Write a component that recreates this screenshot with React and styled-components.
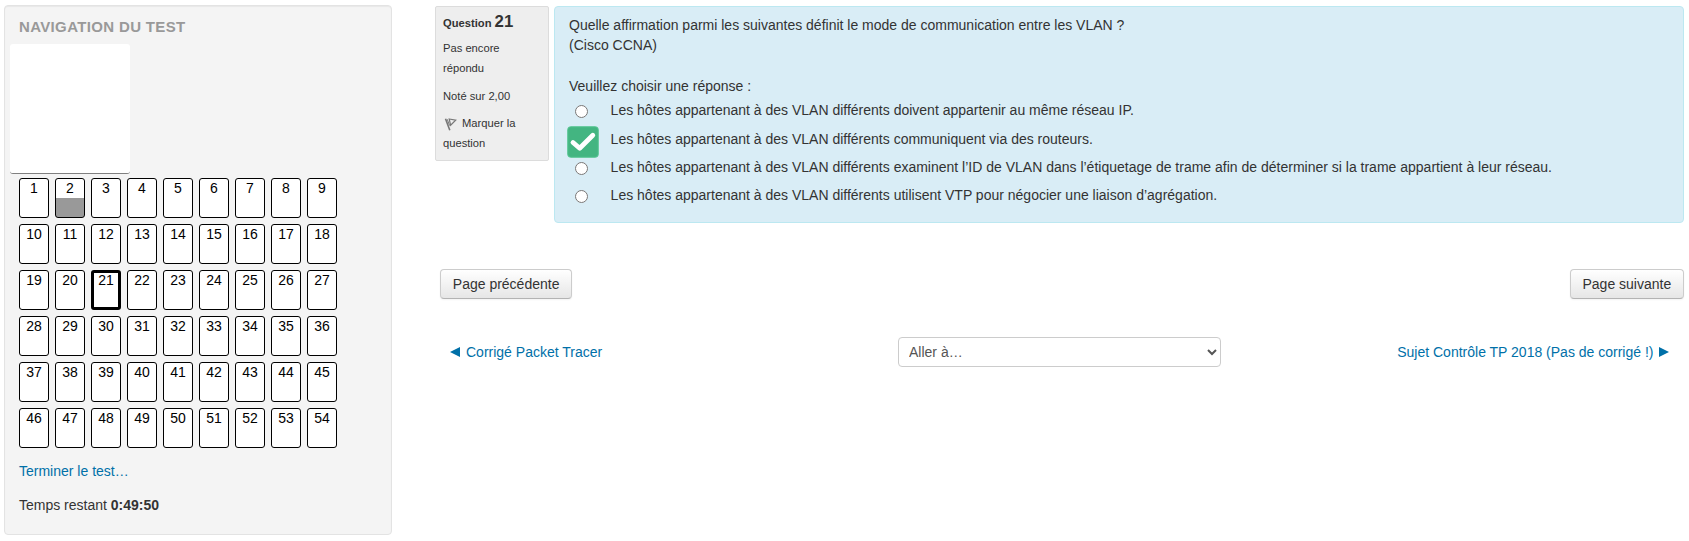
import React from "react";
import styled, { createGlobalStyle, css } from "styled-components";

const Global = createGlobalStyle`
  * { box-sizing: border-box; }
  body {
    margin: 0;
    background: #fff;
    color: #333;
    font: 14px/20px "Liberation Sans", Arial, sans-serif;
  }
  p, h2, h3, fieldset { margin: 0; padding: 0; border: 0; }
`;

const Page = styled.div`
  display: flex;
  align-items: flex-start;
  gap: 43px;
  padding: 5px 5px 0 4px;
`;

const Sidebar = styled.aside`
  flex: 0 0 388px;
  height: 530px;
  padding: 11px 5px 0;
  background: #f4f4f4;
  border: 1px solid #e3e3e3;
  border-radius: 4px;
  box-shadow: inset 0 1px 1px rgba(0, 0, 0, 0.05);
`;

const SidebarTitle = styled.h2`
  padding-left: 9px;
  color: #999;
  font-size: 15px;
  line-height: 20px;
  letter-spacing: 0.35px;
  text-transform: uppercase;
`;

const UserCard = styled.div`
  width: 120px;
  height: 130px;
  margin-top: 7px;
  background: #fff;
  border-bottom: 1px solid #808080;
  border-radius: 3px;
`;

const QuestionGrid = styled.nav`
  display: grid;
  grid-template-columns: repeat(9, 30px);
  gap: 6px;
  margin: 4px 0 0 9px;
`;

const QuestionButton = styled.a`
  height: 40px;
  border: 1px solid #000;
  border-radius: 3px;
  color: #000;
  text-align: center;
  line-height: 18px;
  background: ${(p) => (p.$answered ? "linear-gradient(#fff 19px, #999 19px)" : "#fff")};
  ${(p) =>
    p.$current &&
    css`
      border-width: 3px;
      line-height: 14px;
    `}
`;

const SidebarLine = styled.p`
  margin: ${(p) => p.$top}px 0 0 9px;
`;

const Link = styled.a`
  color: #0070a8;
`;

const Main = styled.main`
  flex: 1;
  min-width: 0;
  padding-top: 1px;
`;

const Question = styled.section`
  display: flex;
  align-items: flex-start;
  gap: 5px;
`;

const Info = styled.div`
  flex: 0 0 114px;
  height: 155px;
  padding: 5px 7px;
  background: #eee;
  border: 1px solid #dcdcdc;
  border-radius: 2px;
  font-size: 11.2px;
  line-height: 20px;
`;

const InfoTitle = styled.h3`
  font-size: 11.2px;
  line-height: 20px;
`;

const Number = styled.span`
  font-size: 16.8px;
`;

const InfoText = styled.p`
  margin-top: ${(p) => p.$top}px;
`;

const Flag = styled.svg`
  width: 16px;
  height: 16px;
  margin-right: 3px;
  vertical-align: -5px;
`;

const Content = styled.div`
  flex: 1;
  height: 217px;
  padding: 8px 14px;
  background: #d9edf6;
  border: 1px solid #bce8f1;
  border-radius: 4px;
`;

const Prompt = styled.p`
  margin-top: ${(p) => p.$top || 0}px;
`;

const Answers = styled.fieldset`
  display: grid;
  grid-template-rows: 29px 28px 28px 28px;
  margin-top: 4px;
`;

const Answer = styled.label`
  display: grid;
  grid-template-columns: 26px 1fr;
  column-gap: 15.6px;
  align-items: start;
`;

const Radio = styled.input`
  width: 13px;
  height: 13px;
  margin: 5px 0 0 6px;
`;

const Check = styled.svg`
  width: 32px;
  height: 32px;
  margin: -3px 0 0 -2px;
`;

const Buttons = styled.div`
  display: flex;
  justify-content: space-between;
  margin: 46px 0 0 5px;
`;

const Button = styled.button`
  height: 30px;
  padding: 0 11.8px;
  color: #333;
  font: inherit;
  background: linear-gradient(#fff, #e6e6e6);
  border: 1px solid #ccc;
  border-bottom-color: #b3b3b3;
  border-radius: 4px;
  box-shadow: inset 0 1px 0 rgba(255, 255, 255, 0.2), 0 1px 2px rgba(0, 0, 0, 0.05);
`;

const ActivityNav = styled.nav`
  display: grid;
  grid-template-columns: 1fr 323px 1fr;
  align-items: center;
  margin: 38px 15px 0;
`;

const NavLink = styled(Link)`
  display: flex;
  align-items: center;
  gap: ${(p) => (p.$end ? 5.5 : 6)}px;
  justify-content: ${(p) => (p.$end ? "flex-end" : "flex-start")};
`;

const Arrow = styled.svg`
  width: 10px;
  height: 10px;
`;

const Jump = styled.select`
  width: 323px;
  height: 30px;
  padding: 4px 6px;
  color: #555;
  font: inherit;
  background: #fff;
  border: 1px solid #ccc;
  border-radius: 4px;
`;

const answers = [
  "Les hôtes appartenant à des VLAN différents doivent appartenir au même réseau IP.",
  "Les hôtes appartenant à des VLAN différents communiquent via des routeurs.",
  "Les hôtes appartenant à des VLAN différents examinent l’ID de VLAN dans l’étiquetage de trame afin de déterminer si la trame appartient à leur réseau.",
  "Les hôtes appartenant à des VLAN différents utilisent VTP pour négocier une liaison d’agrégation.",
];

function CheckMark() {
  return (
    <Check viewBox="0 0 32 32">
      <rect x="0.7" y="0.7" width="30.6" height="30.6" rx="3" fill="#43b581" stroke="#5bc795" />
      <path d="M6 16.5 12.7 22.3 25.8 9.2" fill="none" stroke="#fff" strokeWidth="4.8" strokeLinecap="round" strokeLinejoin="round" />
    </Check>
  );
}

function FlagIcon() {
  return (
    <Flag viewBox="0 0 16 16" fill="none" stroke="#777">
      <path d="M2.5 2.8 6.8 14.2" strokeWidth="1.6" />
      <path d="M4.2 3.2 6.6 9.6" strokeWidth="1" />
      <path d="M6.2 3 12.7 4.2 7.6 9.2Z" strokeWidth="1.2" />
    </Flag>
  );
}

export default function App() {
  return (
    <>
      <Global />
      <Page>
        <Sidebar>
          <SidebarTitle>Navigation du test</SidebarTitle>
          <UserCard />
          <QuestionGrid>
            {Array.from({ length: 54 }, (_, i) => (
              <QuestionButton key={i} $answered={i === 1} $current={i === 20}>
                {i + 1}
              </QuestionButton>
            ))}
          </QuestionGrid>
          <SidebarLine $top={13}>
            <Link>Terminer le test…</Link>
          </SidebarLine>
          <SidebarLine $top={14}>
            Temps restant <b>0:49:50</b>
          </SidebarLine>
        </Sidebar>
        <Main>
          <Question>
            <Info>
              <InfoTitle>
                Question <Number>21</Number>
              </InfoTitle>
              <InfoText $top={5}>Pas encore répondu</InfoText>
              <InfoText $top={8}>Noté sur 2,00</InfoText>
              <InfoText $top={7}>
                <FlagIcon />
                Marquer la question
              </InfoText>
            </Info>
            <Content>
              <Prompt>
                Quelle affirmation parmi les suivantes définit le mode de communication entre les VLAN ?
                <br />
                (Cisco CCNA)
              </Prompt>
              <Prompt $top={21}>Veuillez choisir une réponse :</Prompt>
              <Answers>
                {answers.map((text, i) => (
                  <Answer key={text}>
                    {i === 1 ? <CheckMark /> : <Radio type="radio" name="answer" />}
                    <span>{text}</span>
                  </Answer>
                ))}
              </Answers>
            </Content>
          </Question>
          <Buttons>
            <Button>Page précédente</Button>
            <Button>Page suivante</Button>
          </Buttons>
          <ActivityNav>
            <NavLink>
              <Arrow viewBox="0 0 10 10">
                <path d="M0 5 10 0V10Z" fill="currentColor" />
              </Arrow>
              Corrigé Packet Tracer
            </NavLink>
            <Jump>
              <option>Aller à…</option>
            </Jump>
            <NavLink $end>
              Sujet Contrôle TP 2018 (Pas de corrigé !)
              <Arrow viewBox="0 0 10 10">
                <path d="M10 5 0 0V10Z" fill="currentColor" />
              </Arrow>
            </NavLink>
          </ActivityNav>
        </Main>
      </Page>
    </>
  );
}
